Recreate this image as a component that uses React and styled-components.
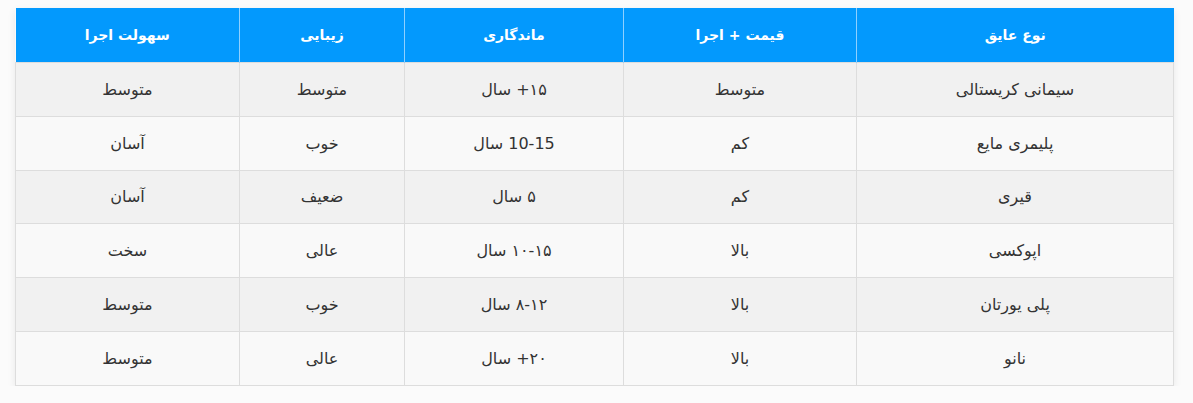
import React from "react";
import styled, { createGlobalStyle } from "styled-components";

const rows = [
  ["سیمانی کریستالی", "متوسط", "۱۵+ سال", "متوسط", "متوسط"],
  ["پلیمری مایع", "کم", "10-15 سال", "خوب", "آسان"],
  ["قیری", "کم", "۵ سال", "ضعیف", "آسان"],
  ["اپوکسی", "بالا", "۱۰-۱۵ سال", "عالی", "سخت"],
  ["پلی یورتان", "بالا", "۸-۱۲ سال", "خوب", "متوسط"],
  ["نانو", "بالا", "۲۰+ سال", "عالی", "متوسط"],
];

const headers = [
  { label: "نوع عایق", width: 317 },
  { label: "قیمت + اجرا", width: 233 },
  { label: "ماندگاری", width: 219 },
  { label: "زیبایی", width: 165 },
  { label: "سهولت اجرا", width: 224 },
];

const App = () => {
  return (
    <>
      <GlobalStyle />
      <Wrapper>
        <Table>
          <colgroup>
            {headers.map((h) => (
              <col key={h.label} style={{ width: h.width }} />
            ))}
          </colgroup>
          <thead>
            <tr>
              {headers.map((h) => (
                <HeadCell key={h.label}>{h.label}</HeadCell>
              ))}
            </tr>
          </thead>
          <tbody>
            {rows.map((row, i) => (
              <Row key={i} $striped={i % 2 === 0}>
                {row.map((cell, j) => (
                  <Cell key={j}>{cell}</Cell>
                ))}
              </Row>
            ))}
          </tbody>
        </Table>
      </Wrapper>
    </>
  );
};

const GlobalStyle = createGlobalStyle`
  body {
    margin: 0;
    background: #fbfbfb;
    font-family: "DejaVu Sans", "Noto Sans", sans-serif;
  }
`;

const Wrapper = styled.div`
  padding: 8px 19px 0 15px;
  direction: rtl;
`;

const Table = styled.table`
  width: 1158px;
  border-collapse: collapse;
  table-layout: fixed;
  box-shadow: 0 3px 8px rgba(0, 0, 0, 0.08);
  background: #f9f9f9;
`;

const HeadCell = styled.th`
  height: 54px;
  padding: 0;
  background: #0399fd;
  color: #ffffff;
  font-size: 14px;
  font-weight: bold;
  text-align: center;
  border-left: 1px solid #8fd0ff;
  &:last-child {
    border-left: none;
  }
`;

const Row = styled.tr`
  background: ${(p) => (p.$striped ? "#f1f1f1" : "#f9f9f9")};
`;

const Cell = styled.td`
  height: 52.8px;
  padding: 0;
  color: #333;
  font-size: 16px;
  text-align: center;
  border: 1px solid #dddddd;
`;

export default App;
